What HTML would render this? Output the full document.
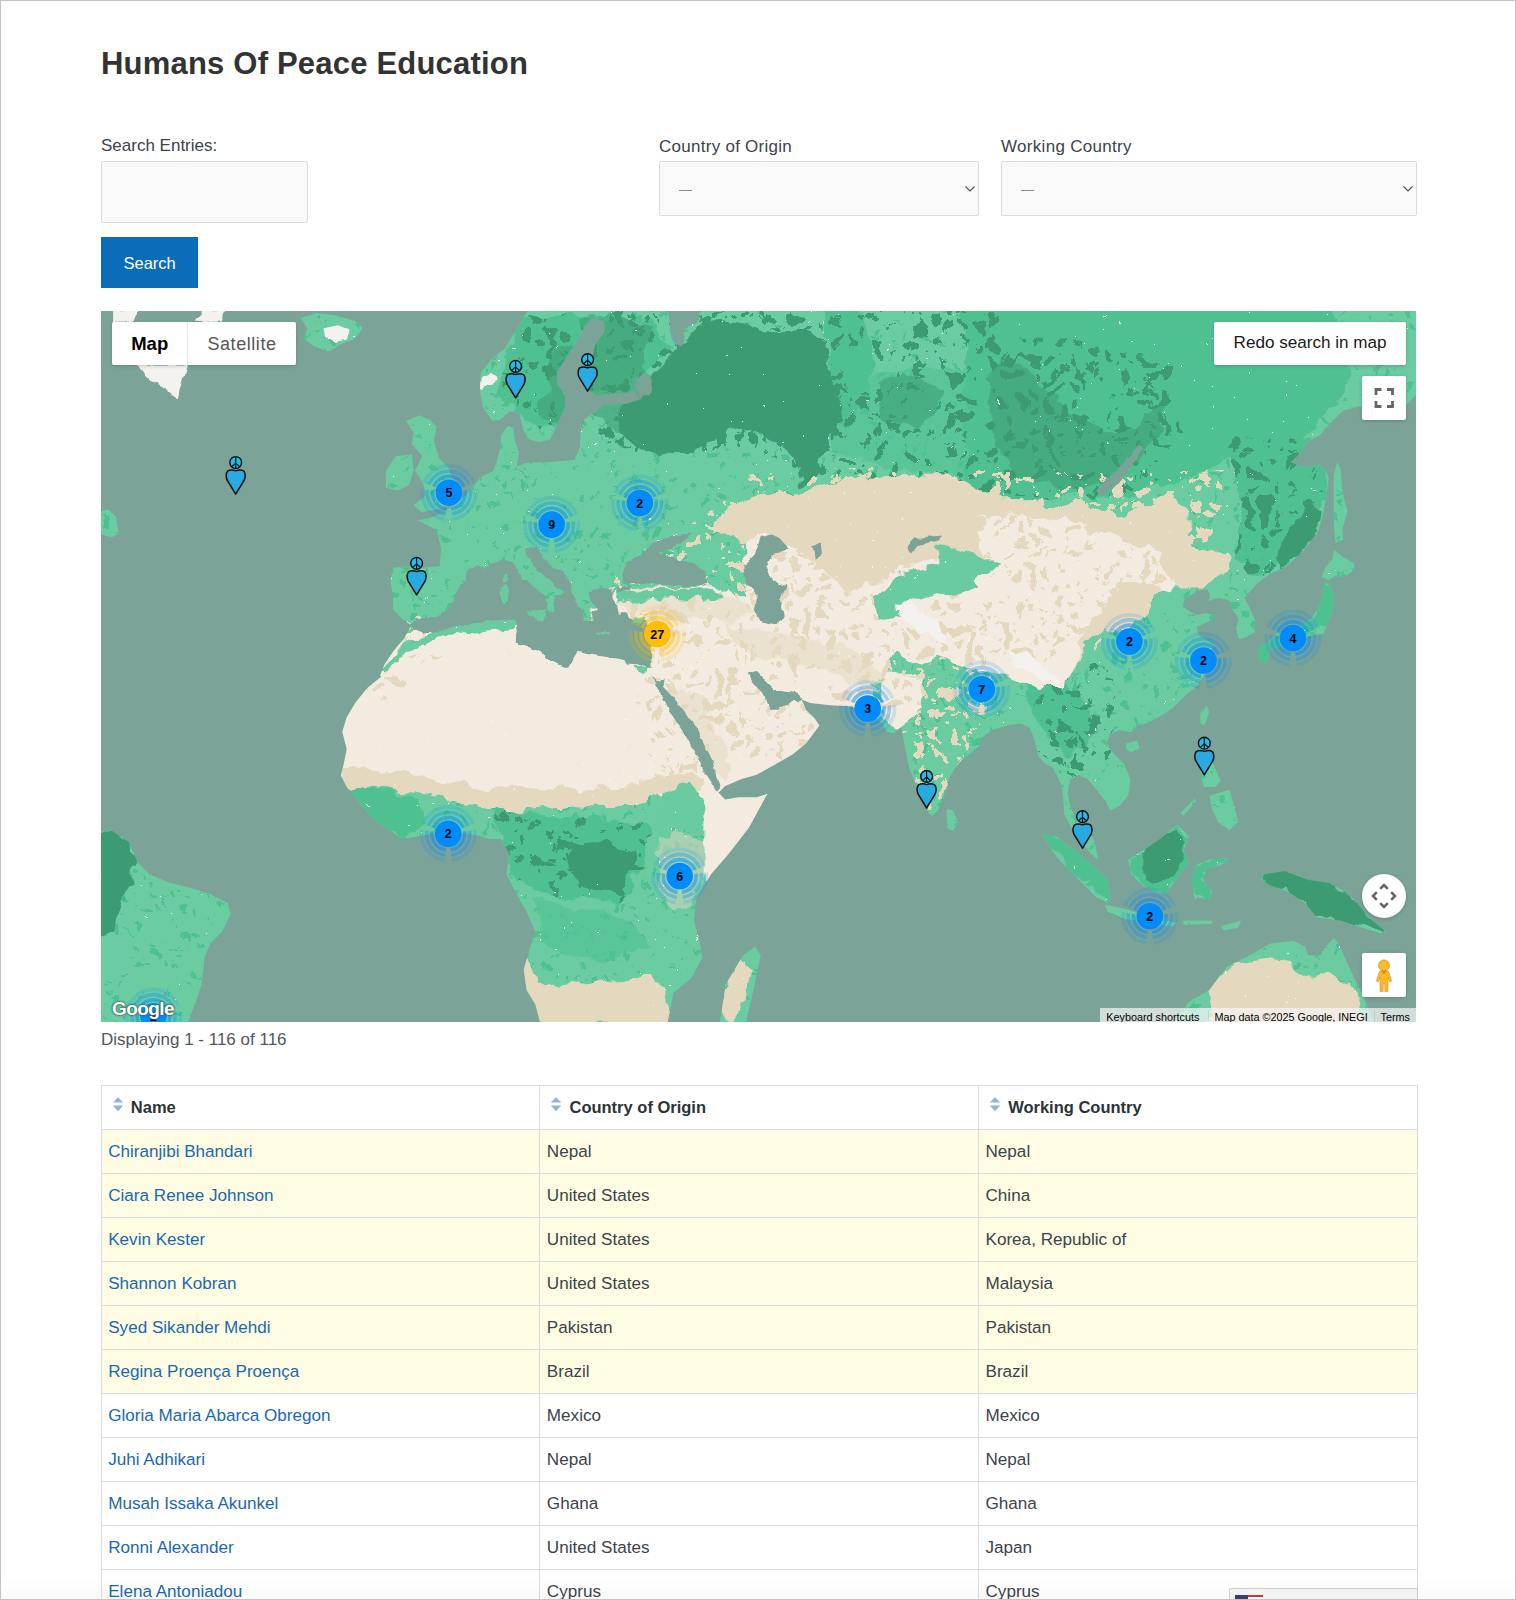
<!DOCTYPE html>
<html><head><meta charset="utf-8">
<style>
html,body{margin:0;padding:0;background:#fff;}
body{width:1516px;height:1600px;position:relative;overflow:hidden;font-family:"Liberation Sans",sans-serif;}
.frame{position:absolute;left:0;top:0;width:1514px;height:1598px;border:1px solid #c3c3c3;pointer-events:none;z-index:50;}
.t{position:absolute;white-space:nowrap;line-height:1;}
.title{left:101px;top:47.5px;font-size:31px;font-weight:bold;color:#333;letter-spacing:0.2px;}
.lbl{font-size:17px;color:#3c434a;}
.inp{position:absolute;box-sizing:border-box;background:#f9f9f9;border:1px solid #dcdcde;border-radius:2px;}
.btn{position:absolute;left:101px;top:237px;width:97px;height:51px;background:#0b6cb9;}
.sel .dash{position:absolute;height:1px;background:#8c8f94;}
.map{position:absolute;left:101px;top:311px;width:1315px;height:711px;overflow:hidden;background:#7ba397;}
.tbl{position:absolute;left:101px;top:1085px;width:1316px;}
.row{position:absolute;left:0;width:1316px;height:44px;box-sizing:border-box;}
.cell{position:absolute;top:0;height:44px;box-sizing:border-box;}
.ct{position:absolute;font-size:17.1px;line-height:1;white-space:nowrap;color:#3c434a;}
.lnk{color:#1a68b0;}
</style></head><body>
<div class="frame"></div>
<div class="t title">Humans Of Peace Education</div>
<div class="t lbl" style="left:101px;top:137px;">Search Entries:</div>
<div class="inp" style="left:101px;top:161px;width:207px;height:62px;"></div>
<div class="btn"></div>
<div class="t" style="left:123.5px;top:254.5px;font-size:16.5px;color:#fff;">Search</div>
<div class="t lbl" style="left:659px;top:137.5px;letter-spacing:0.27px;">Country of Origin</div>
<div class="inp" style="left:659px;top:161px;width:320px;height:55px;"></div>
<div style="position:absolute;left:679px;top:190px;width:13px;height:1.2px;background:#8c8f94;"></div>
<svg style="position:absolute;left:963px;top:184px" width="14" height="10"><path d="M2.5 2.5 L7 7 L11.5 2.5" fill="none" stroke="#50575e" stroke-width="1.2"/></svg>
<div class="t lbl" style="left:1001px;top:137.5px;letter-spacing:0.3px;">Working Country</div>
<div class="inp" style="left:1001px;top:161px;width:416px;height:55px;"></div>
<div style="position:absolute;left:1021px;top:190px;width:13px;height:1.2px;background:#8c8f94;"></div>
<svg style="position:absolute;left:1401px;top:184px" width="14" height="10"><path d="M2.5 2.5 L7 7 L11.5 2.5" fill="none" stroke="#50575e" stroke-width="1.2"/></svg>
<div class="map"><svg width="1315" height="711" viewBox="0 0 1315 711" style="position:absolute;left:0;top:0">
<defs><clipPath id="land"><path d="M1315.0 -11.0 L427.0 -11.0 L427.0 -1.1 L415.8 18.7 L403.5 37.7 L391.1 47.8 L379.9 61.3 L378.8 79.2 L382.2 97.2 L391.1 109.5 L397.9 109.5 L409.1 100.5 L418.1 101.7 L422.5 119.6 L428.1 128.6 L438.2 131.3 L449.4 128.6 L456.2 112.9 L464.0 97.2 L464.0 84.8 L456.2 72.5 L456.2 61.3 L466.3 44.5 L476.4 29.9 L484.2 14.2 L490.9 7.5 L503.3 9.7 L503.3 20.9 L494.3 33.2 L490.9 47.8 L492.1 65.8 L488.7 79.2 L495.4 84.8 L516.7 82.6 L534.7 80.3 L539.2 88.2 L525.7 92.7 L503.3 93.8 L495.4 99.4 L483.1 108.4 L479.7 119.6 L478.6 137.5 L473.0 148.8 L449.4 151.0 L424.8 152.1 L415.8 155.5 L418.1 142.0 L413.6 128.6 L412.4 116.2 L406.8 115.1 L400.1 124.1 L399.0 137.5 L395.6 151.0 L392.3 160.0 L382.2 164.4 L373.2 173.4 L364.2 184.6 L353.0 193.6 L341.8 202.6 L328.3 207.1 L317.1 209.3 L318.3 210.2 L335.7 218.9 L340.0 237.8 L338.6 255.2 L324.1 256.7 L306.6 255.2 L292.1 256.7 L289.2 269.7 L292.1 284.2 L292.1 298.7 L300.8 307.5 L311.0 314.7 L308.2 317.7 L303.7 326.7 L292.5 340.1 L283.5 353.6 L279.0 364.8 L280.5 365.6 L266.0 377.2 L254.4 391.7 L245.7 406.2 L241.3 420.8 L245.7 438.2 L242.8 452.7 L239.9 464.3 L245.7 475.9 L257.3 490.4 L271.8 507.8 L289.2 519.4 L300.8 528.1 L318.3 525.2 L332.8 522.3 L347.3 525.2 L364.7 522.3 L379.2 525.2 L387.9 528.1 L399.5 528.1 L408.2 542.7 L405.3 563.0 L414.0 580.4 L425.6 600.7 L434.4 621.0 L428.5 638.4 L422.7 658.7 L425.6 679.1 L434.4 693.6 L439.0 711.0 L439.0 719.0 L567.0 719.0 L566.7 711.0 L572.5 682.0 L589.9 667.5 L601.5 647.1 L598.6 629.7 L592.8 609.4 L595.7 586.2 L610.2 563.0 L627.7 542.7 L648.0 516.5 L665.4 484.6 L666.8 482.8 L655.6 486.2 L637.7 486.2 L624.2 488.4 L617.5 481.7 L624.2 475.0 L639.9 468.2 L655.6 463.8 L673.6 453.7 L691.5 443.6 L705.0 432.4 L711.7 423.4 L718.4 414.4 L713.9 407.7 L705.0 398.7 L700.5 388.6 L709.4 392.0 L729.6 394.2 L747.6 395.3 L763.3 398.7 L772.2 403.2 L781.2 412.2 L785.7 421.1 L792.4 422.3 L800.3 416.7 L803.6 434.6 L808.1 457.0 L817.1 479.4 L826.1 499.6 L830.6 505.2 L837.3 499.6 L844.0 483.9 L848.5 466.0 L857.5 452.5 L870.9 441.3 L879.0 434.6 L879.4 428.1 L890.6 419.1 L906.3 414.6 L919.7 412.4 L928.7 416.8 L933.2 428.1 L937.7 446.0 L944.4 452.7 L951.1 456.1 L955.6 463.9 L961.2 477.4 L962.4 490.8 L963.5 504.3 L973.6 522.2 L982.5 533.5 L991.5 544.7 L997.1 549.2 L993.8 531.2 L987.0 517.8 L975.8 508.8 L969.1 495.3 L966.8 481.9 L969.1 468.4 L978.1 463.9 L987.0 468.4 L996.0 479.6 L1005.0 490.8 L1009.4 499.8 L1018.4 495.3 L1027.4 484.1 L1029.6 468.4 L1022.9 452.7 L1011.7 441.5 L1005.0 432.5 L1009.4 423.6 L1018.4 419.1 L1029.6 421.3 L1036.4 414.6 L1045.3 412.4 L1058.8 405.6 L1072.2 396.7 L1085.7 383.2 L1096.9 374.2 L1103.6 363.0 L1108.1 347.3 L1112.6 333.9 L1097.3 322.8 L1095.6 315.9 L1111.0 309.1 L1114.5 303.9 L1104.2 302.2 L1095.6 303.9 L1088.7 300.5 L1081.9 295.4 L1083.6 288.5 L1095.6 279.9 L1105.9 278.2 L1109.3 283.4 L1107.6 290.2 L1117.9 286.8 L1128.2 289.4 L1131.6 298.8 L1137.6 307.4 L1135.0 317.7 L1137.6 327.9 L1145.3 326.2 L1153.9 321.1 L1153.9 309.1 L1148.8 297.1 L1143.6 286.8 L1155.6 273.1 L1169.3 262.8 L1184.8 255.9 L1201.9 240.5 L1217.4 219.9 L1222.5 201.0 L1225.9 180.5 L1227.7 166.7 L1224.2 158.2 L1217.4 153.0 L1208.8 156.4 L1198.5 154.7 L1189.9 151.3 L1196.8 144.4 L1207.1 130.7 L1218.6 124.6 L1230.2 111.5 L1241.8 99.9 L1256.3 95.6 L1285.3 94.1 L1305.6 94.1 L1315.8 82.5 L1329.0 82.0 Z"/><path d="M305.2 110.1 L318.3 104.3 L328.4 108.6 L335.7 115.9 L332.8 130.4 L338.6 147.8 L347.3 156.5 L351.6 168.1 L358.9 179.7 L356.0 191.4 L341.5 197.2 L321.2 201.5 L312.5 194.3 L325.5 184.1 L321.2 171.0 L313.9 159.4 L321.2 144.9 L311.0 133.3 L312.5 121.7 Z"/><path d="M284.9 159.4 L295.0 144.9 L311.0 143.5 L312.5 159.4 L308.1 173.9 L296.5 179.7 L284.9 176.8 Z"/><path d="M199.3 7.1 L215.2 2.1 L234.1 4.2 L254.4 10.0 L261.7 17.2 L254.4 27.4 L239.9 33.2 L228.3 40.4 L213.8 36.1 L202.2 27.4 L206.5 17.2 Z"/><path d="M-1.0 200.1 L7.7 198.6 L15.0 205.9 L17.9 223.3 L10.6 226.2 L-1.0 223.3 Z"/><path d="M845.7 497.6 L852.5 499.8 L856.9 511.0 L852.5 520.0 L846.8 517.8 L845.7 508.8 Z"/><path d="M618.9 711.0 L624.7 673.3 L642.2 644.2 L653.8 635.5 L659.6 644.2 L653.8 673.3 L645.1 711.0 Z"/><path d="M1025.1 432.5 L1036.4 429.2 L1038.6 437.0 L1029.6 441.5 L1025.1 438.1 Z"/><path d="M1099.2 401.1 L1105.9 394.4 L1108.1 401.1 L1103.6 414.6 L1099.2 412.4 Z"/><path d="M941.4 522.3 L954.5 525.2 L974.8 539.7 L995.1 557.2 L1006.7 568.8 L1009.6 586.2 L1006.7 592.0 L995.1 586.2 L977.7 568.8 L960.3 551.4 L948.7 536.8 Z"/><path d="M1003.8 593.4 L1024.1 597.8 L1041.5 603.6 L1064.7 609.4 L1076.4 612.3 L1070.6 615.2 L1047.3 612.3 L1024.1 608.0 L1006.7 600.7 Z"/><path d="M1082.2 609.4 L1111.2 609.4 L1111.2 612.9 L1082.2 613.8 Z"/><path d="M1119.9 615.2 L1140.2 609.4 L1137.3 616.7 L1122.8 619.6 Z"/><path d="M1027.0 548.5 L1041.5 539.7 L1058.9 528.1 L1076.4 513.6 L1088.0 525.2 L1082.2 539.7 L1088.0 551.4 L1079.3 563.0 L1070.6 574.6 L1064.7 583.3 L1053.1 580.4 L1041.5 574.6 L1029.9 563.0 Z"/><path d="M1090.9 571.7 L1093.8 554.3 L1108.3 548.5 L1128.6 547.0 L1119.9 554.3 L1105.4 557.2 L1102.5 568.8 L1111.2 580.4 L1108.3 589.1 L1096.7 586.2 L1093.8 589.1 Z"/><path d="M1096.7 438.2 L1105.4 438.2 L1119.9 470.1 L1114.1 475.9 L1102.5 475.9 L1099.6 461.4 Z"/><path d="M1108.3 484.6 L1128.6 478.8 L1137.3 510.7 L1128.6 519.4 L1117.0 510.7 L1111.2 499.1 Z"/><path d="M1079.3 502.0 L1093.8 487.5 L1095.2 490.4 L1082.2 504.9 Z"/><path d="M1163.4 563.0 L1183.7 560.1 L1207.0 568.8 L1227.3 571.7 L1244.7 580.4 L1256.3 592.0 L1267.9 606.5 L1285.3 621.0 L1279.5 622.5 L1256.3 615.2 L1238.9 609.4 L1215.7 606.5 L1204.1 592.0 L1186.6 580.4 L1169.2 574.6 L1160.5 568.8 Z"/><path d="M1070.6 713.9 L1088.0 690.7 L1108.3 679.1 L1125.7 655.8 L1148.9 644.2 L1169.2 632.6 L1192.5 629.7 L1204.1 635.5 L1207.0 644.2 L1218.6 644.2 L1227.3 632.6 L1233.1 626.8 L1238.9 635.5 L1250.5 661.6 L1262.1 684.9 L1273.7 713.9 Z"/><path d="M1236.2 151.3 L1239.7 158.2 L1241.4 180.5 L1246.5 201.0 L1244.8 206.2 L1241.4 218.2 L1242.2 228.5 L1234.5 231.9 L1232.8 214.8 L1232.8 180.5 L1232.8 163.3 Z"/><path d="M1232.8 238.8 L1241.4 245.6 L1253.4 252.5 L1253.4 259.3 L1243.1 266.2 L1234.5 264.5 L1227.7 269.6 L1220.8 266.2 L1224.2 255.9 L1231.1 249.1 Z"/><path d="M1224.2 271.3 L1220.8 283.4 L1219.1 293.6 L1210.5 307.4 L1201.9 312.5 L1189.9 317.7 L1176.2 322.8 L1165.9 331.4 L1159.1 334.8 L1157.3 341.7 L1159.1 352.0 L1165.9 352.0 L1169.3 338.2 L1179.6 334.8 L1189.9 331.4 L1200.2 327.9 L1210.5 324.5 L1222.5 322.8 L1225.9 314.2 L1231.1 300.5 L1232.8 286.8 L1229.4 274.8 Z"/><path d="M-3.9 520.9 L10.6 519.4 L28.0 531.0 L36.7 551.4 L48.3 563.0 L68.7 571.7 L91.9 577.5 L109.3 583.3 L126.7 592.0 L129.6 603.6 L120.9 621.0 L109.3 632.6 L103.5 647.1 L100.6 673.3 L94.8 690.7 L86.1 713.9 L-3.9 713.9 Z"/></clipPath><clipPath id="desc"><path d="M801.4 409.9 L830.6 376.3 L864.2 387.5 L879.0 421.1 L857.5 452.5 L844.0 483.9 L830.6 504.1 L814.9 470.5 L805.9 434.6 Z"/><path d="M827.8 266.6 L906.3 277.8 L917.5 356.3 L883.9 401.1 L827.8 423.6 Z"/><path d="M499.0 279.0 L659.0 159.0 L859.0 159.0 L1139.0 159.0 L1099.0 249.0 L1049.0 289.0 L989.0 339.0 L859.0 369.0 L779.0 449.0 L659.0 449.0 L599.0 429.0 L554.0 389.0 Z"/><path d="M539.0 389.0 L599.0 379.0 L619.0 469.0 L579.0 489.0 L549.0 449.0 Z"/><path d="M259.0 309.0 L319.0 309.0 L339.0 339.0 L279.0 389.0 L249.0 369.0 Z"/></clipPath><clipPath id="forc"><path d="M879.0 23.0 L966.1 28.8 L1067.7 52.0 L1082.2 124.6 L1053.1 182.7 L966.1 185.6 L879.0 182.7 Z"/><path d="M413.6 16.4 L436.0 5.2 L480.8 3.0 L503.3 7.5 L548.1 7.5 L570.6 38.9 L525.7 72.5 L480.8 88.2 L465.1 110.6 L436.0 119.6 L413.6 99.4 L395.6 83.7 L404.6 50.1 Z"/><path d="M479.0 -5.5 L899.0 -5.5 L899.0 166.2 L728.3 166.2 L645.2 138.5 L534.4 144.1 L479.0 124.7 Z"/><path d="M391.5 495.8 L432.2 501.6 L475.7 504.5 L519.2 510.3 L548.3 516.1 L542.5 545.1 L530.8 579.9 L519.2 591.5 L490.2 591.5 L461.2 585.7 L432.2 579.9 L408.9 562.5 L403.1 539.3 Z"/><path d="M1124.8 125.6 L1227.7 125.6 L1227.7 180.5 L1193.4 240.5 L1159.1 266.2 L1133.3 249.1 L1141.9 197.6 Z"/><path d="M1163.4 563.0 L1183.7 560.1 L1207.0 568.8 L1227.3 571.7 L1244.7 580.4 L1256.3 592.0 L1267.9 606.5 L1285.3 621.0 L1279.5 622.5 L1256.3 615.2 L1238.9 609.4 L1215.7 606.5 L1204.1 592.0 L1186.6 580.4 L1169.2 574.6 L1160.5 568.8 Z"/><path d="M934.1 354.0 L1009.6 354.0 L1018.3 441.1 L966.1 470.1 L937.0 441.1 Z"/></clipPath><filter id="rag2" x="-2%" y="-2%" width="104%" height="104%"><feTurbulence type="fractalNoise" baseFrequency="0.12" numOctaves="2" seed="4" result="n"/><feDisplacementMap in="SourceGraphic" in2="n" scale="5" xChannelSelector="R" yChannelSelector="G"/></filter><filter id="rag" x="-5%" y="-5%" width="110%" height="110%"><feTurbulence type="fractalNoise" baseFrequency="0.045" numOctaves="3" seed="7" result="n"/><feDisplacementMap in="SourceGraphic" in2="n" scale="18" xChannelSelector="R" yChannelSelector="G"/></filter><filter id="spkMed" x="0" y="0" width="1315" height="711" filterUnits="userSpaceOnUse" color-interpolation-filters="sRGB"><feTurbulence type="turbulence" baseFrequency="0.1" numOctaves="2" seed="21"/><feColorMatrix type="matrix" values="0 0 0 0 0.31  0 0 0 0 0.757  0 0 0 0 0.565  12 0 0 0 -5.2"/><feComponentTransfer><feFuncA type="discrete" tableValues="0 1"/></feComponentTransfer></filter><filter id="spkDark" x="0" y="0" width="1315" height="711" filterUnits="userSpaceOnUse" color-interpolation-filters="sRGB"><feTurbulence type="turbulence" baseFrequency="0.07" numOctaves="2" seed="9"/><feColorMatrix type="matrix" values="0 0 0 0 0.239  0 0 0 0 0.608  0 0 0 0 0.447  11 0 0 0 -3.7"/><feComponentTransfer><feFuncA type="discrete" tableValues="0 1"/></feComponentTransfer></filter><filter id="spkTan" x="0" y="0" width="1315" height="711" filterUnits="userSpaceOnUse" color-interpolation-filters="sRGB"><feTurbulence type="turbulence" baseFrequency="0.08" numOctaves="2" seed="13"/><feColorMatrix type="matrix" values="0 0 0 0 0.894  0 0 0 0 0.847  0 0 0 0 0.749  11 0 0 0 -3.6"/><feComponentTransfer><feFuncA type="discrete" tableValues="0 1"/></feComponentTransfer></filter><filter id="spkWhite" x="0" y="0" width="1315" height="711" filterUnits="userSpaceOnUse" color-interpolation-filters="sRGB"><feTurbulence type="fractalNoise" baseFrequency="0.3" numOctaves="2" seed="3"/><feColorMatrix type="matrix" values="0 0 0 0 0.97  0 0 0 0 0.97  0 0 0 0 0.95  25 0 0 0 -20.2"/><feComponentTransfer><feFuncA type="discrete" tableValues="0 1"/></feComponentTransfer></filter></defs>
<rect width="1315" height="711" fill="#7ba397"/>
<path d="M1315.0 -11.0 L427.0 -11.0 L427.0 -1.1 L415.8 18.7 L403.5 37.7 L391.1 47.8 L379.9 61.3 L378.8 79.2 L382.2 97.2 L391.1 109.5 L397.9 109.5 L409.1 100.5 L418.1 101.7 L422.5 119.6 L428.1 128.6 L438.2 131.3 L449.4 128.6 L456.2 112.9 L464.0 97.2 L464.0 84.8 L456.2 72.5 L456.2 61.3 L466.3 44.5 L476.4 29.9 L484.2 14.2 L490.9 7.5 L503.3 9.7 L503.3 20.9 L494.3 33.2 L490.9 47.8 L492.1 65.8 L488.7 79.2 L495.4 84.8 L516.7 82.6 L534.7 80.3 L539.2 88.2 L525.7 92.7 L503.3 93.8 L495.4 99.4 L483.1 108.4 L479.7 119.6 L478.6 137.5 L473.0 148.8 L449.4 151.0 L424.8 152.1 L415.8 155.5 L418.1 142.0 L413.6 128.6 L412.4 116.2 L406.8 115.1 L400.1 124.1 L399.0 137.5 L395.6 151.0 L392.3 160.0 L382.2 164.4 L373.2 173.4 L364.2 184.6 L353.0 193.6 L341.8 202.6 L328.3 207.1 L317.1 209.3 L318.3 210.2 L335.7 218.9 L340.0 237.8 L338.6 255.2 L324.1 256.7 L306.6 255.2 L292.1 256.7 L289.2 269.7 L292.1 284.2 L292.1 298.7 L300.8 307.5 L311.0 314.7 L308.2 317.7 L303.7 326.7 L292.5 340.1 L283.5 353.6 L279.0 364.8 L280.5 365.6 L266.0 377.2 L254.4 391.7 L245.7 406.2 L241.3 420.8 L245.7 438.2 L242.8 452.7 L239.9 464.3 L245.7 475.9 L257.3 490.4 L271.8 507.8 L289.2 519.4 L300.8 528.1 L318.3 525.2 L332.8 522.3 L347.3 525.2 L364.7 522.3 L379.2 525.2 L387.9 528.1 L399.5 528.1 L408.2 542.7 L405.3 563.0 L414.0 580.4 L425.6 600.7 L434.4 621.0 L428.5 638.4 L422.7 658.7 L425.6 679.1 L434.4 693.6 L439.0 711.0 L439.0 719.0 L567.0 719.0 L566.7 711.0 L572.5 682.0 L589.9 667.5 L601.5 647.1 L598.6 629.7 L592.8 609.4 L595.7 586.2 L610.2 563.0 L627.7 542.7 L648.0 516.5 L665.4 484.6 L666.8 482.8 L655.6 486.2 L637.7 486.2 L624.2 488.4 L617.5 481.7 L624.2 475.0 L639.9 468.2 L655.6 463.8 L673.6 453.7 L691.5 443.6 L705.0 432.4 L711.7 423.4 L718.4 414.4 L713.9 407.7 L705.0 398.7 L700.5 388.6 L709.4 392.0 L729.6 394.2 L747.6 395.3 L763.3 398.7 L772.2 403.2 L781.2 412.2 L785.7 421.1 L792.4 422.3 L800.3 416.7 L803.6 434.6 L808.1 457.0 L817.1 479.4 L826.1 499.6 L830.6 505.2 L837.3 499.6 L844.0 483.9 L848.5 466.0 L857.5 452.5 L870.9 441.3 L879.0 434.6 L879.4 428.1 L890.6 419.1 L906.3 414.6 L919.7 412.4 L928.7 416.8 L933.2 428.1 L937.7 446.0 L944.4 452.7 L951.1 456.1 L955.6 463.9 L961.2 477.4 L962.4 490.8 L963.5 504.3 L973.6 522.2 L982.5 533.5 L991.5 544.7 L997.1 549.2 L993.8 531.2 L987.0 517.8 L975.8 508.8 L969.1 495.3 L966.8 481.9 L969.1 468.4 L978.1 463.9 L987.0 468.4 L996.0 479.6 L1005.0 490.8 L1009.4 499.8 L1018.4 495.3 L1027.4 484.1 L1029.6 468.4 L1022.9 452.7 L1011.7 441.5 L1005.0 432.5 L1009.4 423.6 L1018.4 419.1 L1029.6 421.3 L1036.4 414.6 L1045.3 412.4 L1058.8 405.6 L1072.2 396.7 L1085.7 383.2 L1096.9 374.2 L1103.6 363.0 L1108.1 347.3 L1112.6 333.9 L1097.3 322.8 L1095.6 315.9 L1111.0 309.1 L1114.5 303.9 L1104.2 302.2 L1095.6 303.9 L1088.7 300.5 L1081.9 295.4 L1083.6 288.5 L1095.6 279.9 L1105.9 278.2 L1109.3 283.4 L1107.6 290.2 L1117.9 286.8 L1128.2 289.4 L1131.6 298.8 L1137.6 307.4 L1135.0 317.7 L1137.6 327.9 L1145.3 326.2 L1153.9 321.1 L1153.9 309.1 L1148.8 297.1 L1143.6 286.8 L1155.6 273.1 L1169.3 262.8 L1184.8 255.9 L1201.9 240.5 L1217.4 219.9 L1222.5 201.0 L1225.9 180.5 L1227.7 166.7 L1224.2 158.2 L1217.4 153.0 L1208.8 156.4 L1198.5 154.7 L1189.9 151.3 L1196.8 144.4 L1207.1 130.7 L1218.6 124.6 L1230.2 111.5 L1241.8 99.9 L1256.3 95.6 L1285.3 94.1 L1305.6 94.1 L1315.8 82.5 L1329.0 82.0 Z" fill="#6bcba1"/>
<path d="M305.2 110.1 L318.3 104.3 L328.4 108.6 L335.7 115.9 L332.8 130.4 L338.6 147.8 L347.3 156.5 L351.6 168.1 L358.9 179.7 L356.0 191.4 L341.5 197.2 L321.2 201.5 L312.5 194.3 L325.5 184.1 L321.2 171.0 L313.9 159.4 L321.2 144.9 L311.0 133.3 L312.5 121.7 Z" fill="#6bcba1"/>
<path d="M284.9 159.4 L295.0 144.9 L311.0 143.5 L312.5 159.4 L308.1 173.9 L296.5 179.7 L284.9 176.8 Z" fill="#6bcba1"/>
<path d="M199.3 7.1 L215.2 2.1 L234.1 4.2 L254.4 10.0 L261.7 17.2 L254.4 27.4 L239.9 33.2 L228.3 40.4 L213.8 36.1 L202.2 27.4 L206.5 17.2 Z" fill="#6bcba1"/>
<path d="M-1.0 200.1 L7.7 198.6 L15.0 205.9 L17.9 223.3 L10.6 226.2 L-1.0 223.3 Z" fill="#6bcba1"/>
<path d="M426.0 300.2 L435.5 299.1 L445.0 299.1 L442.6 309.7 L440.2 310.9 L433.1 306.2 L427.2 303.8 Z" fill="#6bcba1"/>
<path d="M399.3 276.5 L405.8 274.1 L408.2 278.9 L407.0 288.4 L403.4 293.1 L400.5 289.6 L398.7 282.4 Z" fill="#6bcba1"/>
<path d="M401.7 263.4 L405.8 262.2 L407.0 268.2 L404.6 272.9 L402.2 269.4 Z" fill="#6bcba1"/>
<path d="M494.9 320.4 L509.1 321.6 L506.7 324.0 L496.0 322.8 Z" fill="#6bcba1"/>
<path d="M532.4 307.6 L543.6 306.9 L540.3 311.4 L533.6 311.0 Z" fill="#6bcba1"/>
<path d="M845.7 497.6 L852.5 499.8 L856.9 511.0 L852.5 520.0 L846.8 517.8 L845.7 508.8 Z" fill="#6bcba1"/>
<path d="M618.9 711.0 L624.7 673.3 L642.2 644.2 L653.8 635.5 L659.6 644.2 L653.8 673.3 L645.1 711.0 Z" fill="#6bcba1"/>
<path d="M1025.1 432.5 L1036.4 429.2 L1038.6 437.0 L1029.6 441.5 L1025.1 438.1 Z" fill="#6bcba1"/>
<path d="M1099.2 401.1 L1105.9 394.4 L1108.1 401.1 L1103.6 414.6 L1099.2 412.4 Z" fill="#6bcba1"/>
<path d="M941.4 522.3 L954.5 525.2 L974.8 539.7 L995.1 557.2 L1006.7 568.8 L1009.6 586.2 L1006.7 592.0 L995.1 586.2 L977.7 568.8 L960.3 551.4 L948.7 536.8 Z" fill="#6bcba1"/>
<path d="M1003.8 593.4 L1024.1 597.8 L1041.5 603.6 L1064.7 609.4 L1076.4 612.3 L1070.6 615.2 L1047.3 612.3 L1024.1 608.0 L1006.7 600.7 Z" fill="#6bcba1"/>
<path d="M1082.2 609.4 L1111.2 609.4 L1111.2 612.9 L1082.2 613.8 Z" fill="#6bcba1"/>
<path d="M1119.9 615.2 L1140.2 609.4 L1137.3 616.7 L1122.8 619.6 Z" fill="#6bcba1"/>
<path d="M1027.0 548.5 L1041.5 539.7 L1058.9 528.1 L1076.4 513.6 L1088.0 525.2 L1082.2 539.7 L1088.0 551.4 L1079.3 563.0 L1070.6 574.6 L1064.7 583.3 L1053.1 580.4 L1041.5 574.6 L1029.9 563.0 Z" fill="#6bcba1"/>
<path d="M1090.9 571.7 L1093.8 554.3 L1108.3 548.5 L1128.6 547.0 L1119.9 554.3 L1105.4 557.2 L1102.5 568.8 L1111.2 580.4 L1108.3 589.1 L1096.7 586.2 L1093.8 589.1 Z" fill="#6bcba1"/>
<path d="M1096.7 438.2 L1105.4 438.2 L1119.9 470.1 L1114.1 475.9 L1102.5 475.9 L1099.6 461.4 Z" fill="#6bcba1"/>
<path d="M1108.3 484.6 L1128.6 478.8 L1137.3 510.7 L1128.6 519.4 L1117.0 510.7 L1111.2 499.1 Z" fill="#6bcba1"/>
<path d="M1079.3 502.0 L1093.8 487.5 L1095.2 490.4 L1082.2 504.9 Z" fill="#6bcba1"/>
<path d="M1163.4 563.0 L1183.7 560.1 L1207.0 568.8 L1227.3 571.7 L1244.7 580.4 L1256.3 592.0 L1267.9 606.5 L1285.3 621.0 L1279.5 622.5 L1256.3 615.2 L1238.9 609.4 L1215.7 606.5 L1204.1 592.0 L1186.6 580.4 L1169.2 574.6 L1160.5 568.8 Z" fill="#6bcba1"/>
<path d="M1070.6 713.9 L1088.0 690.7 L1108.3 679.1 L1125.7 655.8 L1148.9 644.2 L1169.2 632.6 L1192.5 629.7 L1204.1 635.5 L1207.0 644.2 L1218.6 644.2 L1227.3 632.6 L1233.1 626.8 L1238.9 635.5 L1250.5 661.6 L1262.1 684.9 L1273.7 713.9 Z" fill="#6bcba1"/>
<path d="M1236.2 151.3 L1239.7 158.2 L1241.4 180.5 L1246.5 201.0 L1244.8 206.2 L1241.4 218.2 L1242.2 228.5 L1234.5 231.9 L1232.8 214.8 L1232.8 180.5 L1232.8 163.3 Z" fill="#6bcba1"/>
<path d="M1232.8 238.8 L1241.4 245.6 L1253.4 252.5 L1253.4 259.3 L1243.1 266.2 L1234.5 264.5 L1227.7 269.6 L1220.8 266.2 L1224.2 255.9 L1231.1 249.1 Z" fill="#6bcba1"/>
<path d="M1224.2 271.3 L1220.8 283.4 L1219.1 293.6 L1210.5 307.4 L1201.9 312.5 L1189.9 317.7 L1176.2 322.8 L1165.9 331.4 L1159.1 334.8 L1157.3 341.7 L1159.1 352.0 L1165.9 352.0 L1169.3 338.2 L1179.6 334.8 L1189.9 331.4 L1200.2 327.9 L1210.5 324.5 L1222.5 322.8 L1225.9 314.2 L1231.1 300.5 L1232.8 286.8 L1229.4 274.8 Z" fill="#6bcba1"/>
<path d="M-3.9 520.9 L10.6 519.4 L28.0 531.0 L36.7 551.4 L48.3 563.0 L68.7 571.7 L91.9 577.5 L109.3 583.3 L126.7 592.0 L129.6 603.6 L120.9 621.0 L109.3 632.6 L103.5 647.1 L100.6 673.3 L94.8 690.7 L86.1 713.9 L-3.9 713.9 Z" fill="#6bcba1"/>
<g clip-path="url(#land)"><g filter="url(#rag)">
<path d="M864.5 -11.8 L1227.3 -11.8 L1256.3 37.5 L1241.8 81.1 L1198.3 133.3 L1140.2 144.9 L1082.2 168.1 L1024.1 182.7 L966.1 182.7 L908.0 191.4 L864.5 197.2 Z" fill="#4fc190"/>
<path d="M722.8 -5.5 L756.0 -5.5 L772.7 27.7 L767.1 83.1 L750.5 116.4 L733.9 105.3 Z" fill="#4fc190"/>
<path d="M413.6 16.4 L436.0 5.2 L480.8 3.0 L503.3 7.5 L548.1 7.5 L570.6 38.9 L525.7 72.5 L480.8 88.2 L465.1 110.6 L436.0 119.6 L413.6 99.4 L395.6 83.7 L404.6 50.1 Z" fill="#4fc190"/>
<path d="M391.5 495.8 L432.2 501.6 L475.7 504.5 L519.2 510.3 L548.3 516.1 L542.5 545.1 L530.8 579.9 L519.2 591.5 L490.2 591.5 L461.2 585.7 L432.2 579.9 L408.9 562.5 L403.1 539.3 Z" fill="#4fc190"/>
<path d="M243.5 475.4 L287.0 478.3 L316.1 487.0 L324.8 516.1 L301.6 527.7 L272.5 510.3 L252.2 492.9 Z" fill="#4fc190"/>
<path d="M924.2 383.2 L939.9 363.0 L964.6 369.7 L982.5 385.4 L996.0 414.6 L984.8 434.8 L964.6 446.0 L946.7 428.1 L933.2 410.1 Z" fill="#4fc190"/>
<path d="M937.0 516.5 L1012.5 557.2 L1012.5 594.9 L942.9 533.9 Z" fill="#4fc190"/>
<path d="M1219.1 266.2 L1236.2 274.8 L1236.2 300.5 L1210.5 326.2 L1159.1 355.4 L1155.6 331.4 L1210.5 309.1 Z" fill="#4fc190"/>
<path d="M1124.8 125.6 L1227.7 125.6 L1227.7 180.5 L1193.4 240.5 L1159.1 266.2 L1133.3 249.1 L1141.9 197.6 Z" fill="#4fc190"/>
<path d="M1027.0 548.5 L1041.5 539.7 L1058.9 528.1 L1076.4 513.6 L1088.0 525.2 L1082.2 539.7 L1088.0 551.4 L1079.3 563.0 L1070.6 574.6 L1064.7 583.3 L1053.1 580.4 L1041.5 574.6 L1029.9 563.0 Z" fill="#4fc190"/>
<path d="M1090.9 571.7 L1093.8 554.3 L1108.3 548.5 L1128.6 547.0 L1119.9 554.3 L1105.4 557.2 L1102.5 568.8 L1111.2 580.4 L1108.3 589.1 L1096.7 586.2 L1093.8 589.1 Z" fill="#4fc190"/>
<rect width="1315" height="711" filter="url(#spkMed)"/>
<path d="M432.2 591.5 L519.2 603.1 L548.3 632.2 L504.7 649.6 L461.2 643.8 L438.0 626.4 Z" fill="#4fc190" opacity="0.6"/>
<path d="M729.2 66.6 L879.0 52.0 L879.0 168.1 L787.3 156.5 L729.2 139.1 Z" fill="#4fc190" opacity="0.6"/>
<path d="M902.2 43.3 L937.0 66.6 L966.1 98.5 L1000.9 118.8 L1029.9 115.9 L1053.1 95.6 L1070.6 81.1 L1058.9 115.9 L1041.5 144.9 L1012.5 168.1 L974.8 179.7 L937.0 173.9 L908.0 156.5 L890.6 115.9 L884.8 69.5 Z" fill="#3d9b72" opacity="0.55"/>
<path d="M453.9 38.9 L471.9 27.6 L487.6 34.4 L480.8 61.3 L469.6 88.2 L453.9 110.6 L436.0 106.1 L445.0 74.7 Z" fill="#3d9b72" opacity="0.55"/>
<path d="M778.2 72.0 L805.9 61.0 L839.2 77.6 L833.6 105.3 L811.5 116.4 L783.8 108.0 Z" fill="#3d9b72" opacity="0.55"/>
<path d="M479.0 5.5 L512.2 0.0 L548.3 16.6 L542.7 83.1 L548.3 124.7 L506.7 116.4 L479.0 83.1 Z" fill="#3d9b72" opacity="0.55"/>
<g clip-path="url(#forc)"><rect width="1315" height="711" filter="url(#spkDark)"/></g>
<path d="M520.6 91.4 L551.0 61.0 L573.2 38.8 L595.4 16.6 L617.5 11.1 L645.2 16.6 L672.9 22.2 L700.6 16.6 L722.8 27.7 L728.3 55.4 L733.9 83.1 L742.2 105.3 L728.3 124.7 L722.8 144.1 L714.5 166.2 L700.6 174.5 L695.1 155.1 L678.5 130.2 L659.1 124.7 L634.1 119.1 L612.0 127.4 L589.8 144.1 L562.1 144.1 L534.4 138.5 L520.6 119.1 Z" fill="#3d9b72"/>
<path d="M472.8 533.5 L504.7 530.6 L533.7 539.3 L530.8 565.4 L519.2 582.8 L496.0 579.9 L472.8 574.1 L467.0 550.9 Z" fill="#3d9b72"/>
<path d="M-3.9 520.9 L16.4 522.3 L28.0 533.9 L33.8 551.4 L28.0 571.7 L22.2 586.2 L16.4 600.7 L13.5 621.0 L-3.9 629.7 Z" fill="#3d9b72"/>
<path d="M1041.5 539.7 L1058.9 528.1 L1076.4 516.5 L1085.1 528.1 L1079.3 545.6 L1067.7 568.8 L1053.1 574.6 L1041.5 563.0 Z" fill="#3d9b72"/>
<path d="M1163.4 563.0 L1183.7 560.1 L1207.0 568.8 L1227.3 571.7 L1244.7 580.4 L1256.3 592.0 L1267.9 606.5 L1285.3 621.0 L1279.5 622.5 L1256.3 615.2 L1238.9 609.4 L1215.7 606.5 L1204.1 592.0 L1186.6 580.4 L1169.2 574.6 L1160.5 568.8 Z" fill="#3d9b72"/>
<path d="M1186.5 218.2 L1200.2 201.0 L1213.9 194.2 L1220.8 201.0 L1217.4 219.9 L1201.9 240.5 L1184.8 255.9 L1176.2 259.3 L1174.5 249.1 L1181.3 235.3 Z" fill="#3d9b72"/>
<path d="M219.0 339.0 L319.0 319.0 L399.0 314.0 L479.0 319.0 L559.0 339.0 L579.0 389.0 L619.0 459.0 L659.0 479.0 L606.3 469.6 L562.8 481.2 L533.7 495.8 L504.7 495.8 L475.7 492.9 L446.7 495.8 L417.7 498.7 L391.5 495.8 L365.4 492.9 L339.3 487.0 L310.3 481.2 L281.2 475.4 L243.5 475.4 L219.0 479.0 Z" fill="#f3ebdf"/>
<path d="M451.5 376.5 L499.0 291.0 L513.2 281.5 L546.5 274.4 L582.1 276.7 L605.9 272.0 L646.2 286.2 L643.9 229.2 L627.2 224.5 L610.6 217.4 L622.5 200.7 L641.5 191.2 L665.2 184.1 L689.0 184.1 L712.7 177.0 L736.5 172.2 L760.2 169.9 L784.0 165.1 L807.7 162.7 L831.5 169.9 L859.0 177.0 L878.9 177.0 L881.7 176.5 L900.7 188.4 L934.0 188.4 L957.7 197.9 L972.0 190.7 L993.4 195.5 L1017.1 207.4 L1040.8 195.5 L1064.6 186.0 L1088.3 200.2 L1088.3 224.0 L1100.2 243.0 L1124.0 238.2 L1131.1 247.7 L1119.2 266.7 L1100.2 276.2 L1076.5 276.2 L1059.8 281.0 L1048.0 295.2 L1040.8 309.5 L1029.0 316.6 L1010.0 319.0 L991.0 323.7 L981.5 335.6 L972.0 357.0 L962.5 376.0 L934.0 376.0 L910.2 366.5 L886.5 361.7 L862.7 357.0 L839.0 347.5 L819.6 352.7 L795.8 340.8 L784.0 352.7 L772.1 376.5 L779.2 409.0 L736.5 471.5 L665.2 495.2 L570.2 495.2 Z" fill="#f3ebdf"/>
<path d="M557.0 469.6 L606.3 458.0 L669.0 472.5 L693.4 545.1 L606.3 603.1 L603.4 559.6 L603.4 524.8 L577.3 516.1 L565.7 501.6 Z" fill="#f3ebdf"/>
<path d="M781.2 360.6 L808.1 360.6 L821.6 376.3 L817.1 403.2 L799.2 416.7 L785.7 403.2 L781.2 383.0 Z" fill="#f3ebdf"/>
<g clip-path="url(#desc)"><rect width="1315" height="711" filter="url(#spkTan)"/></g>
<path d="M240.6 460.9 L258.0 458.0 L287.0 460.9 L316.1 463.8 L345.1 472.5 L374.1 478.3 L403.1 478.3 L432.2 475.4 L461.2 475.4 L490.2 478.3 L519.2 475.4 L548.3 466.7 L577.3 460.9 L606.3 469.6 L594.7 487.0 L562.8 481.2 L533.7 495.8 L504.7 495.8 L475.7 492.9 L446.7 495.8 L417.7 498.7 L391.5 495.8 L365.4 492.9 L339.3 487.0 L310.3 481.2 L281.2 475.4 L243.5 475.4 Z" fill="#e4d8bf"/>
<path d="M610.6 217.4 L622.5 200.7 L641.5 191.2 L665.2 184.1 L689.0 184.1 L712.7 177.0 L736.5 172.2 L760.2 169.9 L784.0 165.1 L807.7 162.7 L831.5 169.9 L859.0 177.0 L878.9 177.0 L878.9 243.5 L831.5 250.6 L795.8 257.7 L772.1 272.0 L748.3 281.5 L724.6 262.5 L700.8 241.1 L684.2 229.2 L665.2 222.1 L643.9 229.2 L627.2 224.5 Z" fill="#e4d8bf"/>
<path d="M881.7 176.5 L900.7 188.4 L934.0 188.4 L957.7 197.9 L972.0 190.7 L993.4 195.5 L1017.1 207.4 L1040.8 195.5 L1064.6 186.0 L1088.3 200.2 L1088.3 224.0 L1100.2 243.0 L1124.0 238.2 L1131.1 247.7 L1119.2 266.7 L1100.2 276.2 L1076.5 276.2 L1067.0 262.0 L1052.7 235.9 L1017.1 228.7 L981.5 212.1 L945.9 207.4 L910.2 200.2 L874.6 207.4 L839.0 200.2 L827.1 164.6 L862.7 167.0 Z" fill="#e4d8bf"/>
<path d="M1059.8 281.0 L1048.0 295.2 L1040.8 309.5 L1029.0 316.6 L1010.0 319.0 L991.0 323.7 L981.5 335.6 L972.0 357.0 L981.5 319.0 L1017.1 276.2 L1052.7 271.5 Z" fill="#e4d8bf"/>
<path d="M420.6 617.7 L432.2 655.4 L438.0 672.8 L461.2 669.9 L490.2 675.7 L519.2 667.0 L548.3 667.0 L565.7 675.7 L571.5 713.4 L420.6 713.4 Z" fill="#e4d8bf"/>
<path d="M623.7 667.0 L641.1 643.8 L652.7 655.4 L644.0 690.2 L629.5 713.4 L620.8 704.7 Z" fill="#e4d8bf"/>
<path d="M1105.4 713.9 L1111.2 667.5 L1125.7 661.6 L1146.0 650.0 L1169.2 647.1 L1186.6 655.8 L1198.3 661.6 L1227.3 661.6 L1244.7 673.3 L1256.3 690.7 L1265.0 713.9 Z" fill="#e4d8bf"/>
<path d="M513.2 281.5 L546.5 274.4 L582.1 276.7 L617.7 281.5 L641.5 291.0 L653.4 305.2 L617.7 310.0 L582.1 305.2 L546.5 302.9 L522.7 302.9 Z" fill="#e4d8bf" opacity="0.5"/>
<path d="M622.5 310.0 L665.2 319.5 L712.7 329.0 L760.2 340.8 L784.0 364.6 L772.1 376.5 L736.5 364.6 L700.8 352.7 L665.2 348.0 L632.0 333.7 Z" fill="#e4d8bf" opacity="0.5"/>
<path d="M565.9 383.0 L583.9 376.3 L606.3 389.7 L617.5 421.1 L633.2 454.8 L624.2 470.5 L610.8 452.5 L595.1 425.6 Z" fill="#e4d8bf" opacity="0.5"/>
<path d="M557.0 524.8 L577.3 521.9 L603.4 530.6 L603.4 559.6 L591.8 591.5 L571.5 600.2 L559.9 579.9 Z" fill="#e4d8bf" opacity="0.5"/>
<path d="M279.0 358.1 L292.5 344.6 L305.9 331.1 L323.9 322.2 L353.0 315.4 L413.6 311.0 L415.8 317.7 L355.3 323.3 L323.9 330.0 L305.9 340.1 L288.0 358.1 Z" fill="#6bcba1"/>
<path d="M562.8 481.2 L586.0 472.5 L603.4 487.0 L603.4 524.8 L577.3 519.0 L557.0 524.8 L548.3 507.4 Z" fill="#6bcba1"/>
<path d="M513.2 282.7 L546.5 277.9 L582.1 277.9 L605.9 275.5 L622.5 286.2 L582.1 288.6 L546.5 288.6 L518.0 293.4 Z" fill="#6bcba1"/>
<path d="M769.7 286.2 L788.7 267.2 L807.7 262.5 L831.5 257.7 L859.0 250.6 L878.9 248.2 L878.9 274.4 L831.5 283.9 L807.7 293.4 L795.8 305.2 L779.2 307.6 Z" fill="#6bcba1"/>
<path d="M834.3 233.5 L862.7 238.2 L898.4 252.5 L886.5 262.0 L834.3 262.0 Z" fill="#6bcba1"/>
<path d="M532.4 353.6 L548.1 351.3 L545.9 360.3 L536.9 362.5 Z" fill="#6bcba1"/>
<path d="M380.0 63.0 L389.0 60.0 L398.0 64.0 L396.0 70.0 L388.0 74.0 L383.0 79.0 L379.0 73.0 Z" fill="#f4f2ee"/>
<path d="M910.2 342.7 L929.2 345.1 L945.9 354.6 L957.7 366.5 L955.4 373.6 L941.1 368.8 L924.5 357.0 L910.2 352.2 Z" fill="#f4f2ee"/>
<path d="M793.5 291.0 L812.5 295.7 L831.5 310.0 L848.1 324.2 L843.3 333.7 L826.7 321.9 L807.7 310.0 L795.8 302.9 Z" fill="#f4f2ee"/>
<rect width="1315" height="711" filter="url(#spkWhite)"/>
</g></g>
<g filter="url(#rag2)">
<path d="M312.6 317.7 L323.9 322.2 L337.3 321.0 L353.0 315.4 L373.2 312.1 L382.2 311.4 L382.2 261.6 L377.7 254.9 L366.5 258.2 L364.2 267.2 L356.4 278.4 L351.9 290.8 L346.3 299.7 L332.8 305.3 L314.9 308.7 L308.2 315.4 Z" fill="#7ba397"/>
<path d="M369.0 256.3 L383.2 257.5 L392.7 252.7 L402.2 248.0 L410.6 251.6 L416.5 259.9 L422.4 268.2 L430.7 274.1 L437.9 278.9 L442.6 283.6 L446.2 290.7 L447.4 297.9 L445.0 300.2 L452.1 300.2 L453.3 290.7 L454.5 284.8 L462.8 283.6 L462.8 281.2 L454.5 275.3 L447.4 268.2 L437.9 261.1 L430.7 252.7 L423.6 238.5 L435.5 236.1 L442.6 246.8 L452.1 255.1 L464.0 263.4 L468.7 271.7 L469.9 278.9 L473.5 288.4 L478.2 295.5 L481.8 300.2 L483.0 309.7 L491.3 309.7 L491.3 300.2 L497.2 299.1 L490.1 290.7 L487.7 283.6 L492.5 278.9 L505.5 276.5 L511.5 278.9 L511.5 288.4 L516.2 295.5 L518.6 305.0 L523.4 309.7 L535.2 312.1 L549.0 314.5 L550.7 357.2 L542.0 354.0 L519.0 348.0 L489.8 343.5 L476.0 341.0 L467.0 357.0 L449.5 350.0 L440.5 341.0 L424.8 335.6 L413.6 331.0 L415.8 320.0 L413.6 308.9 L404.6 308.6 L386.8 309.7 L369.0 312.1 Z" fill="#7ba397"/>
<path d="M503.3 304.2 L523.5 302.0 L532.4 308.7 L543.6 308.7 L545.9 313.2 L550.4 326.7 L550.4 340.1 L548.1 349.1 L541.4 354.7 L525.7 353.6 L514.5 331.1 Z" fill="#7ba397"/>
<path d="M516.2 276.5 L530.5 275.9 L529.3 280.1 L517.4 281.2 Z" fill="#7ba397"/>
<path d="M521.2 263.9 L525.7 250.4 L541.4 243.7 L550.4 232.5 L561.6 228.0 L579.5 223.5 L590.7 222.4 L584.0 230.2 L570.6 236.9 L557.1 241.4 L575.0 248.2 L593.0 252.6 L604.2 261.6 L606.4 270.6 L597.5 275.1 L577.3 275.1 L554.9 272.8 L536.9 271.7 L523.5 272.8 Z" fill="#7ba397"/>
<path d="M659.6 226.2 L671.2 223.3 L679.9 229.1 L688.6 237.8 L671.2 243.6 L665.4 255.2 L671.2 269.7 L685.7 275.5 L679.9 287.1 L682.8 307.5 L674.1 313.3 L659.6 310.4 L653.8 298.7 L656.7 284.2 L645.1 272.6 L642.2 255.2 L653.8 243.6 Z" fill="#7ba397"/>
<path d="M550.2 362.8 L556.9 371.8 L563.7 367.3 L562.5 376.3 L577.1 392.0 L590.6 409.9 L601.8 430.1 L610.8 448.1 L615.3 466.0 L619.3 476.8 L616.4 480.6 L613.0 475.0 L604.0 461.5 L595.1 443.6 L583.9 423.4 L570.4 403.2 L559.2 380.8 Z" fill="#7ba397"/>
<path d="M647.8 362.8 L655.6 359.5 L664.6 369.6 L673.6 378.5 L684.8 380.8 L696.0 381.9 L700.5 386.4 L696.0 392.0 L691.5 389.7 L684.8 394.2 L675.8 398.7 L669.1 398.7 L665.7 389.7 L660.1 380.8 L652.3 371.8 Z" fill="#7ba397"/>
<path d="M536.0 67.0 L545.0 61.0 L551.0 69.0 L549.0 84.0 L539.0 87.0 L534.0 77.0 Z" fill="#7ba397"/>
<path d="M995.1 179.7 L1006.7 168.1 L1021.2 153.6 L1032.8 139.1 L1038.6 133.3 L1041.5 139.1 L1029.9 156.5 L1015.4 173.9 L1000.9 185.6 Z" fill="#7ba397"/>
<path d="M805.3 236.4 L814.8 226.9 L841.0 224.5 L838.6 229.2 L817.2 234.0 L810.1 243.5 Z" fill="#7ba397"/>
<path d="M711.5 234.0 L719.8 232.8 L721.0 243.5 L713.9 248.2 Z" fill="#7ba397"/>
<path d="M566.7 -3.1 L601.5 -3.1 L595.7 11.4 L584.1 17.2 L581.2 34.6 L572.5 31.7 L569.6 17.2 Z" fill="#7ba397"/>
<path d="M426.0 300.2 L435.5 299.1 L445.0 299.1 L442.6 309.7 L440.2 310.9 L433.1 306.2 L427.2 303.8 Z" fill="#6bcba1"/>
<path d="M399.3 276.5 L405.8 274.1 L408.2 278.9 L407.0 288.4 L403.4 293.1 L400.5 289.6 L398.7 282.4 Z" fill="#6bcba1"/>
<path d="M401.7 263.4 L405.8 262.2 L407.0 268.2 L404.6 272.9 L402.2 269.4 Z" fill="#6bcba1"/>
<path d="M494.9 320.4 L509.1 321.6 L506.7 324.0 L496.0 322.8 Z" fill="#6bcba1"/>
<path d="M532.4 307.6 L543.6 306.9 L540.3 311.4 L533.6 311.0 Z" fill="#6bcba1"/>
<path d="M222.5 17.2 L237.0 14.3 L248.6 18.7 L245.7 27.4 L234.1 30.3 L223.9 25.9 Z" fill="#f4f2ee"/>
<path d="M36.7 53.5 L86.1 53.5 L83.2 63.7 L78.8 78.2 L76.8 87.5 L70.1 82.5 L61.4 75.3 L49.8 69.5 L42.5 62.2 Z" fill="#f4f2ee"/>
<path d="M12.1 -0.8 L36.7 -0.8 L32.4 10.8 L12.1 10.8 Z" fill="#f4f2ee"/>
<path d="M102.0 -0.8 L125.3 -0.8 L119.4 10.8 L94.8 10.8 Z" fill="#f4f2ee"/>
</g>
</svg><svg width="1315" height="711" viewBox="0 0 1315 711" style="position:absolute;left:0;top:0;overflow:hidden">
<path d="M332.69 175.56 A16.4 16.4 0 0 1 363.11 175.56 M364.14 179.42 A16.4 16.4 0 0 1 350.18 197.94 M345.62 197.94 A16.4 16.4 0 0 1 331.66 179.42" fill="none" stroke="#008cff" stroke-opacity="0.5" stroke-width="3.6"/>
<path d="M327.87 173.61 A21.6 21.6 0 0 1 367.93 173.61 M369.29 178.69 A21.6 21.6 0 0 1 350.91 203.09 M344.89 203.09 A21.6 21.6 0 0 1 326.51 178.69" fill="none" stroke="#008cff" stroke-opacity="0.32" stroke-width="3.6"/>
<path d="M323.05 171.66 A26.8 26.8 0 0 1 372.75 171.66 M374.44 177.97 A26.8 26.8 0 0 1 351.63 208.24 M344.17 208.24 A26.8 26.8 0 0 1 321.36 177.97" fill="none" stroke="#008cff" stroke-opacity="0.16" stroke-width="3.6"/>
<circle cx="347.9" cy="181.7" r="13.3" fill="#008cff"/>
<text x="347.9" y="186.29999999999998" text-anchor="middle" font-family="Liberation Sans" font-weight="bold" font-size="12.5" fill="#000">5</text>
<path d="M435.49 207.46 A16.4 16.4 0 0 1 465.91 207.46 M466.94 211.32 A16.4 16.4 0 0 1 452.98 229.84 M448.42 229.84 A16.4 16.4 0 0 1 434.46 211.32" fill="none" stroke="#008cff" stroke-opacity="0.5" stroke-width="3.6"/>
<path d="M430.67 205.51 A21.6 21.6 0 0 1 470.73 205.51 M472.09 210.59 A21.6 21.6 0 0 1 453.71 234.99 M447.69 234.99 A21.6 21.6 0 0 1 429.31 210.59" fill="none" stroke="#008cff" stroke-opacity="0.32" stroke-width="3.6"/>
<path d="M425.85 203.56 A26.8 26.8 0 0 1 475.55 203.56 M477.24 209.87 A26.8 26.8 0 0 1 454.43 240.14 M446.97 240.14 A26.8 26.8 0 0 1 424.16 209.87" fill="none" stroke="#008cff" stroke-opacity="0.16" stroke-width="3.6"/>
<circle cx="450.70000000000005" cy="213.60000000000002" r="13.3" fill="#008cff"/>
<text x="450.70000000000005" y="218.20000000000002" text-anchor="middle" font-family="Liberation Sans" font-weight="bold" font-size="12.5" fill="#000">9</text>
<path d="M523.59 185.86 A16.4 16.4 0 0 1 554.01 185.86 M555.04 189.72 A16.4 16.4 0 0 1 541.08 208.24 M536.52 208.24 A16.4 16.4 0 0 1 522.56 189.72" fill="none" stroke="#008cff" stroke-opacity="0.5" stroke-width="3.6"/>
<path d="M518.77 183.91 A21.6 21.6 0 0 1 558.83 183.91 M560.19 188.99 A21.6 21.6 0 0 1 541.81 213.39 M535.79 213.39 A21.6 21.6 0 0 1 517.41 188.99" fill="none" stroke="#008cff" stroke-opacity="0.32" stroke-width="3.6"/>
<path d="M513.95 181.96 A26.8 26.8 0 0 1 563.65 181.96 M565.34 188.27 A26.8 26.8 0 0 1 542.53 218.54 M535.07 218.54 A26.8 26.8 0 0 1 512.26 188.27" fill="none" stroke="#008cff" stroke-opacity="0.16" stroke-width="3.6"/>
<circle cx="538.8" cy="192" r="13.3" fill="#008cff"/>
<text x="538.8" y="196.6" text-anchor="middle" font-family="Liberation Sans" font-weight="bold" font-size="12.5" fill="#000">2</text>
<path d="M541.09 316.86 A16.4 16.4 0 0 1 571.51 316.86 M572.54 320.72 A16.4 16.4 0 0 1 558.58 339.24 M554.02 339.24 A16.4 16.4 0 0 1 540.06 320.72" fill="none" stroke="#ffbf00" stroke-opacity="0.5" stroke-width="3.6"/>
<path d="M536.27 314.91 A21.6 21.6 0 0 1 576.33 314.91 M577.69 319.99 A21.6 21.6 0 0 1 559.31 344.39 M553.29 344.39 A21.6 21.6 0 0 1 534.91 319.99" fill="none" stroke="#ffbf00" stroke-opacity="0.32" stroke-width="3.6"/>
<path d="M531.45 312.96 A26.8 26.8 0 0 1 581.15 312.96 M582.84 319.27 A26.8 26.8 0 0 1 560.03 349.54 M552.57 349.54 A26.8 26.8 0 0 1 529.76 319.27" fill="none" stroke="#ffbf00" stroke-opacity="0.16" stroke-width="3.6"/>
<circle cx="556.3" cy="323" r="13.3" fill="#ffbf00"/>
<text x="556.3" y="327.6" text-anchor="middle" font-family="Liberation Sans" font-weight="bold" font-size="12.5" fill="#000">27</text>
<path d="M1013.19 324.36 A16.4 16.4 0 0 1 1043.61 324.36 M1044.64 328.22 A16.4 16.4 0 0 1 1030.68 346.74 M1026.12 346.74 A16.4 16.4 0 0 1 1012.16 328.22" fill="none" stroke="#008cff" stroke-opacity="0.5" stroke-width="3.6"/>
<path d="M1008.37 322.41 A21.6 21.6 0 0 1 1048.43 322.41 M1049.79 327.49 A21.6 21.6 0 0 1 1031.41 351.89 M1025.39 351.89 A21.6 21.6 0 0 1 1007.01 327.49" fill="none" stroke="#008cff" stroke-opacity="0.32" stroke-width="3.6"/>
<path d="M1003.55 320.46 A26.8 26.8 0 0 1 1053.25 320.46 M1054.94 326.77 A26.8 26.8 0 0 1 1032.13 357.04 M1024.67 357.04 A26.8 26.8 0 0 1 1001.86 326.77" fill="none" stroke="#008cff" stroke-opacity="0.16" stroke-width="3.6"/>
<circle cx="1028.4" cy="330.5" r="13.3" fill="#008cff"/>
<text x="1028.4" y="335.1" text-anchor="middle" font-family="Liberation Sans" font-weight="bold" font-size="12.5" fill="#000">2</text>
<path d="M1087.19 343.36 A16.4 16.4 0 0 1 1117.61 343.36 M1118.64 347.22 A16.4 16.4 0 0 1 1104.68 365.74 M1100.12 365.74 A16.4 16.4 0 0 1 1086.16 347.22" fill="none" stroke="#008cff" stroke-opacity="0.5" stroke-width="3.6"/>
<path d="M1082.37 341.41 A21.6 21.6 0 0 1 1122.43 341.41 M1123.79 346.49 A21.6 21.6 0 0 1 1105.41 370.89 M1099.39 370.89 A21.6 21.6 0 0 1 1081.01 346.49" fill="none" stroke="#008cff" stroke-opacity="0.32" stroke-width="3.6"/>
<path d="M1077.55 339.46 A26.8 26.8 0 0 1 1127.25 339.46 M1128.94 345.77 A26.8 26.8 0 0 1 1106.13 376.04 M1098.67 376.04 A26.8 26.8 0 0 1 1075.86 345.77" fill="none" stroke="#008cff" stroke-opacity="0.16" stroke-width="3.6"/>
<circle cx="1102.4" cy="349.5" r="13.3" fill="#008cff"/>
<text x="1102.4" y="354.1" text-anchor="middle" font-family="Liberation Sans" font-weight="bold" font-size="12.5" fill="#000">2</text>
<path d="M1176.79 320.86 A16.4 16.4 0 0 1 1207.21 320.86 M1208.24 324.72 A16.4 16.4 0 0 1 1194.28 343.24 M1189.72 343.24 A16.4 16.4 0 0 1 1175.76 324.72" fill="none" stroke="#008cff" stroke-opacity="0.5" stroke-width="3.6"/>
<path d="M1171.97 318.91 A21.6 21.6 0 0 1 1212.03 318.91 M1213.39 323.99 A21.6 21.6 0 0 1 1195.01 348.39 M1188.99 348.39 A21.6 21.6 0 0 1 1170.61 323.99" fill="none" stroke="#008cff" stroke-opacity="0.32" stroke-width="3.6"/>
<path d="M1167.15 316.96 A26.8 26.8 0 0 1 1216.85 316.96 M1218.54 323.27 A26.8 26.8 0 0 1 1195.73 353.54 M1188.27 353.54 A26.8 26.8 0 0 1 1165.46 323.27" fill="none" stroke="#008cff" stroke-opacity="0.16" stroke-width="3.6"/>
<circle cx="1192" cy="327" r="13.3" fill="#008cff"/>
<text x="1192" y="331.6" text-anchor="middle" font-family="Liberation Sans" font-weight="bold" font-size="12.5" fill="#000">4</text>
<path d="M865.59 372.06 A16.4 16.4 0 0 1 896.01 372.06 M897.04 375.92 A16.4 16.4 0 0 1 883.08 394.44 M878.52 394.44 A16.4 16.4 0 0 1 864.56 375.92" fill="none" stroke="#008cff" stroke-opacity="0.5" stroke-width="3.6"/>
<path d="M860.77 370.11 A21.6 21.6 0 0 1 900.83 370.11 M902.19 375.19 A21.6 21.6 0 0 1 883.81 399.59 M877.79 399.59 A21.6 21.6 0 0 1 859.41 375.19" fill="none" stroke="#008cff" stroke-opacity="0.32" stroke-width="3.6"/>
<path d="M855.95 368.16 A26.8 26.8 0 0 1 905.65 368.16 M907.34 374.47 A26.8 26.8 0 0 1 884.53 404.74 M877.07 404.74 A26.8 26.8 0 0 1 854.26 374.47" fill="none" stroke="#008cff" stroke-opacity="0.16" stroke-width="3.6"/>
<circle cx="880.8" cy="378.20000000000005" r="13.3" fill="#008cff"/>
<text x="880.8" y="382.80000000000007" text-anchor="middle" font-family="Liberation Sans" font-weight="bold" font-size="12.5" fill="#000">7</text>
<path d="M751.49 391.36 A16.4 16.4 0 0 1 781.91 391.36 M782.94 395.22 A16.4 16.4 0 0 1 768.98 413.74 M764.42 413.74 A16.4 16.4 0 0 1 750.46 395.22" fill="none" stroke="#008cff" stroke-opacity="0.5" stroke-width="3.6"/>
<path d="M746.67 389.41 A21.6 21.6 0 0 1 786.73 389.41 M788.09 394.49 A21.6 21.6 0 0 1 769.71 418.89 M763.69 418.89 A21.6 21.6 0 0 1 745.31 394.49" fill="none" stroke="#008cff" stroke-opacity="0.32" stroke-width="3.6"/>
<path d="M741.85 387.46 A26.8 26.8 0 0 1 791.55 387.46 M793.24 393.77 A26.8 26.8 0 0 1 770.43 424.04 M762.97 424.04 A26.8 26.8 0 0 1 740.16 393.77" fill="none" stroke="#008cff" stroke-opacity="0.16" stroke-width="3.6"/>
<circle cx="766.7" cy="397.5" r="13.3" fill="#008cff"/>
<text x="766.7" y="402.1" text-anchor="middle" font-family="Liberation Sans" font-weight="bold" font-size="12.5" fill="#000">3</text>
<path d="M331.99 516.66 A16.4 16.4 0 0 1 362.41 516.66 M363.44 520.52 A16.4 16.4 0 0 1 349.48 539.04 M344.92 539.04 A16.4 16.4 0 0 1 330.96 520.52" fill="none" stroke="#008cff" stroke-opacity="0.5" stroke-width="3.6"/>
<path d="M327.17 514.71 A21.6 21.6 0 0 1 367.23 514.71 M368.59 519.79 A21.6 21.6 0 0 1 350.21 544.19 M344.19 544.19 A21.6 21.6 0 0 1 325.81 519.79" fill="none" stroke="#008cff" stroke-opacity="0.32" stroke-width="3.6"/>
<path d="M322.35 512.76 A26.8 26.8 0 0 1 372.05 512.76 M373.74 519.07 A26.8 26.8 0 0 1 350.93 549.34 M343.47 549.34 A26.8 26.8 0 0 1 320.66 519.07" fill="none" stroke="#008cff" stroke-opacity="0.16" stroke-width="3.6"/>
<circle cx="347.2" cy="522.8" r="13.3" fill="#008cff"/>
<text x="347.2" y="527.4" text-anchor="middle" font-family="Liberation Sans" font-weight="bold" font-size="12.5" fill="#000">2</text>
<path d="M563.49 558.86 A16.4 16.4 0 0 1 593.91 558.86 M594.94 562.72 A16.4 16.4 0 0 1 580.98 581.24 M576.42 581.24 A16.4 16.4 0 0 1 562.46 562.72" fill="none" stroke="#008cff" stroke-opacity="0.5" stroke-width="3.6"/>
<path d="M558.67 556.91 A21.6 21.6 0 0 1 598.73 556.91 M600.09 561.99 A21.6 21.6 0 0 1 581.71 586.39 M575.69 586.39 A21.6 21.6 0 0 1 557.31 561.99" fill="none" stroke="#008cff" stroke-opacity="0.32" stroke-width="3.6"/>
<path d="M553.85 554.96 A26.8 26.8 0 0 1 603.55 554.96 M605.24 561.27 A26.8 26.8 0 0 1 582.43 591.54 M574.97 591.54 A26.8 26.8 0 0 1 552.16 561.27" fill="none" stroke="#008cff" stroke-opacity="0.16" stroke-width="3.6"/>
<circle cx="578.7" cy="565" r="13.3" fill="#008cff"/>
<text x="578.7" y="569.6" text-anchor="middle" font-family="Liberation Sans" font-weight="bold" font-size="12.5" fill="#000">6</text>
<path d="M1033.59 599.06 A16.4 16.4 0 0 1 1064.01 599.06 M1065.04 602.92 A16.4 16.4 0 0 1 1051.08 621.44 M1046.52 621.44 A16.4 16.4 0 0 1 1032.56 602.92" fill="none" stroke="#008cff" stroke-opacity="0.5" stroke-width="3.6"/>
<path d="M1028.77 597.11 A21.6 21.6 0 0 1 1068.83 597.11 M1070.19 602.19 A21.6 21.6 0 0 1 1051.81 626.59 M1045.79 626.59 A21.6 21.6 0 0 1 1027.41 602.19" fill="none" stroke="#008cff" stroke-opacity="0.32" stroke-width="3.6"/>
<path d="M1023.95 595.16 A26.8 26.8 0 0 1 1073.65 595.16 M1075.34 601.47 A26.8 26.8 0 0 1 1052.53 631.74 M1045.07 631.74 A26.8 26.8 0 0 1 1022.26 601.47" fill="none" stroke="#008cff" stroke-opacity="0.16" stroke-width="3.6"/>
<circle cx="1048.8" cy="605.2" r="13.3" fill="#008cff"/>
<text x="1048.8" y="609.8000000000001" text-anchor="middle" font-family="Liberation Sans" font-weight="bold" font-size="12.5" fill="#000">2</text>
<path d="M37.29 699.06 A16.4 16.4 0 0 1 67.71 699.06 M68.74 702.92 A16.4 16.4 0 0 1 54.78 721.44 M50.22 721.44 A16.4 16.4 0 0 1 36.26 702.92" fill="none" stroke="#008cff" stroke-opacity="0.5" stroke-width="3.6"/>
<path d="M32.47 697.11 A21.6 21.6 0 0 1 72.53 697.11 M73.89 702.19 A21.6 21.6 0 0 1 55.51 726.59 M49.49 726.59 A21.6 21.6 0 0 1 31.11 702.19" fill="none" stroke="#008cff" stroke-opacity="0.32" stroke-width="3.6"/>
<path d="M27.65 695.16 A26.8 26.8 0 0 1 77.35 695.16 M79.04 701.47 A26.8 26.8 0 0 1 56.23 731.74 M48.77 731.74 A26.8 26.8 0 0 1 25.96 701.47" fill="none" stroke="#008cff" stroke-opacity="0.16" stroke-width="3.6"/>
<circle cx="52.5" cy="705.2" r="13.3" fill="#008cff"/>
<text x="52.5" y="709.8000000000001" text-anchor="middle" font-family="Liberation Sans" font-weight="bold" font-size="12.5" fill="#000">2</text>
<g transform="translate(134.70,151.50)"><path d="M0 8.2 Q-5 6.4 -8.2 8.6 Q-10.6 12 -8.6 17.5 L0 31.6 L8.6 17.5 Q10.6 12 8.2 8.6 Q5 6.4 0 8.2 Z" fill="#29aae2" stroke="#111" stroke-width="1.5" stroke-linejoin="round"/><circle cx="0" cy="0" r="5.9" fill="#22bcef" stroke="#111" stroke-width="1.4"/><path d="M0 -5.9 V5.9 M0 0.6 L-4 4.2 M0 0.6 L4 4.2" stroke="#111" stroke-width="1.2" fill="none"/></g>
<g transform="translate(414.60,55.30)"><path d="M0 8.2 Q-5 6.4 -8.2 8.6 Q-10.6 12 -8.6 17.5 L0 31.6 L8.6 17.5 Q10.6 12 8.2 8.6 Q5 6.4 0 8.2 Z" fill="#29aae2" stroke="#111" stroke-width="1.5" stroke-linejoin="round"/><circle cx="0" cy="0" r="5.9" fill="#22bcef" stroke="#111" stroke-width="1.4"/><path d="M0 -5.9 V5.9 M0 0.6 L-4 4.2 M0 0.6 L4 4.2" stroke="#111" stroke-width="1.2" fill="none"/></g>
<g transform="translate(486.60,48.60)"><path d="M0 8.2 Q-5 6.4 -8.2 8.6 Q-10.6 12 -8.6 17.5 L0 31.6 L8.6 17.5 Q10.6 12 8.2 8.6 Q5 6.4 0 8.2 Z" fill="#29aae2" stroke="#111" stroke-width="1.5" stroke-linejoin="round"/><circle cx="0" cy="0" r="5.9" fill="#22bcef" stroke="#111" stroke-width="1.4"/><path d="M0 -5.9 V5.9 M0 0.6 L-4 4.2 M0 0.6 L4 4.2" stroke="#111" stroke-width="1.2" fill="none"/></g>
<g transform="translate(315.60,252.30)"><path d="M0 8.2 Q-5 6.4 -8.2 8.6 Q-10.6 12 -8.6 17.5 L0 31.6 L8.6 17.5 Q10.6 12 8.2 8.6 Q5 6.4 0 8.2 Z" fill="#29aae2" stroke="#111" stroke-width="1.5" stroke-linejoin="round"/><circle cx="0" cy="0" r="5.9" fill="#22bcef" stroke="#111" stroke-width="1.4"/><path d="M0 -5.9 V5.9 M0 0.6 L-4 4.2 M0 0.6 L4 4.2" stroke="#111" stroke-width="1.2" fill="none"/></g>
<g transform="translate(825.60,465.40)"><path d="M0 8.2 Q-5 6.4 -8.2 8.6 Q-10.6 12 -8.6 17.5 L0 31.6 L8.6 17.5 Q10.6 12 8.2 8.6 Q5 6.4 0 8.2 Z" fill="#29aae2" stroke="#111" stroke-width="1.5" stroke-linejoin="round"/><circle cx="0" cy="0" r="5.9" fill="#22bcef" stroke="#111" stroke-width="1.4"/><path d="M0 -5.9 V5.9 M0 0.6 L-4 4.2 M0 0.6 L4 4.2" stroke="#111" stroke-width="1.2" fill="none"/></g>
<g transform="translate(1103.30,432.20)"><path d="M0 8.2 Q-5 6.4 -8.2 8.6 Q-10.6 12 -8.6 17.5 L0 31.6 L8.6 17.5 Q10.6 12 8.2 8.6 Q5 6.4 0 8.2 Z" fill="#29aae2" stroke="#111" stroke-width="1.5" stroke-linejoin="round"/><circle cx="0" cy="0" r="5.9" fill="#22bcef" stroke="#111" stroke-width="1.4"/><path d="M0 -5.9 V5.9 M0 0.6 L-4 4.2 M0 0.6 L4 4.2" stroke="#111" stroke-width="1.2" fill="none"/></g>
<g transform="translate(981.50,505.60)"><path d="M0 8.2 Q-5 6.4 -8.2 8.6 Q-10.6 12 -8.6 17.5 L0 31.6 L8.6 17.5 Q10.6 12 8.2 8.6 Q5 6.4 0 8.2 Z" fill="#29aae2" stroke="#111" stroke-width="1.5" stroke-linejoin="round"/><circle cx="0" cy="0" r="5.9" fill="#22bcef" stroke="#111" stroke-width="1.4"/><path d="M0 -5.9 V5.9 M0 0.6 L-4 4.2 M0 0.6 L4 4.2" stroke="#111" stroke-width="1.2" fill="none"/></g>
</svg>
<div style="position:absolute;left:11px;top:10.8px;width:184px;height:43.5px;background:#fff;border-radius:2px;box-shadow:0 1px 4px -1px rgba(0,0,0,0.3);"></div>
<div style="position:absolute;left:85.5px;top:10.8px;width:1px;height:43.5px;background:#e6e6e6;"></div>
<div style="position:absolute;left:30.2px;top:23.5px;font-size:18.5px;line-height:1;font-weight:bold;color:#000;white-space:nowrap;">Map</div>
<div style="position:absolute;left:106.5px;top:23.5px;font-size:18px;line-height:1;color:#565656;letter-spacing:0.55px;white-space:nowrap;">Satellite</div>
<div style="position:absolute;left:1113.3px;top:10.5px;width:192px;height:43.6px;background:#fff;border-radius:2px;box-shadow:0 1px 4px -1px rgba(0,0,0,0.3);"></div>
<div style="position:absolute;left:1132.6px;top:23.3px;font-size:17.1px;line-height:1;color:#1a1a1a;white-space:nowrap;">Redo search in map</div>
<div style="position:absolute;left:1260.7px;top:65.1px;width:44px;height:44px;background:#fff;border-radius:2px;box-shadow:0 1px 4px -1px rgba(0,0,0,0.3);"><svg width="44" height="44" style="position:absolute;left:0;top:0"><path d="M14 19 V13.5 H19.5 M25 13.5 H30.5 V19 M30.5 25 V30.5 H25 M19.5 30.5 H14 V25" fill="none" stroke="#666" stroke-width="2.8"/></svg></div>
<div style="position:absolute;left:1261px;top:562.5px;width:44px;height:44px;background:#fff;border-radius:50%;box-shadow:0 1px 4px -1px rgba(0,0,0,0.3);"><svg width="44" height="44" style="position:absolute;left:0;top:0"><g fill="none" stroke="#666" stroke-width="2.6"><path d="M18.2 14.8 L22 11 L25.8 14.8"/><path d="M18.2 29.2 L22 33 L25.8 29.2"/><path d="M14.8 18.2 L11 22 L14.8 25.8"/><path d="M29.2 18.2 L33 22 L29.2 25.8"/></g></svg></div>
<div style="position:absolute;left:1261px;top:641.8px;width:44px;height:44px;background:#fff;border-radius:2px;box-shadow:0 1px 4px -1px rgba(0,0,0,0.3);"><svg width="44" height="44" style="position:absolute;left:0;top:0"><path d="M17 20 Q17 17.6 19.5 17.6 H24.5 Q27 17.6 27 20 L29.5 27.5 Q29.8 28.6 28.6 28.6 L27.6 28.6 L26 24 V38.6 H22.8 V31 H21.2 V38.6 H18 V24 L16.4 28.6 L15.4 28.6 Q14.2 28.6 14.5 27.5 Z" fill="#fdb92d" stroke="#b8860b" stroke-width="0.5"/><path d="M19.5 17.8 L22 22 L24.5 17.8 Z" fill="#e8891c"/><circle cx="22" cy="12.4" r="5.6" fill="#fdb92d" stroke="#b8860b" stroke-width="0.5"/></svg></div>
<div style="position:absolute;left:999.4px;top:697px;width:316px;height:15px;background:rgba(245,245,245,0.72);"></div>
<div style="position:absolute;left:1005.3px;top:700.6px;font-size:10.8px;line-height:1;color:#000;white-space:nowrap;">Keyboard shortcuts</div>
<div style="position:absolute;left:1113.5px;top:700.6px;font-size:10.8px;line-height:1;color:#000;white-space:nowrap;">Map data ©2025 Google, INEGI</div>
<div style="position:absolute;left:1279.6px;top:700.6px;font-size:10.8px;line-height:1;color:#000;white-space:nowrap;">Terms</div>
<div style="position:absolute;left:1106.5px;top:699px;width:1px;height:12px;background:rgba(0,0,0,0.08);"></div>
<div style="position:absolute;left:1272.5px;top:699px;width:1px;height:12px;background:rgba(0,0,0,0.08);"></div>
<div style="position:absolute;left:11px;top:687.5px;font-size:19px;line-height:1;font-weight:bold;color:#fff;white-space:nowrap;letter-spacing:-0.6px;-webkit-text-stroke:0px;text-shadow:0 0 1.5px #2f5f4f,0 0 1.5px #2f5f4f,0 0 2px #2f5f4f;">Google</div></div>
<div style="position:absolute;left:101px;top:1085px;width:1316px;height:528px;background:#fff;"></div>
<svg style="position:absolute;left:111.5px;top:1096.8px" width="12" height="16"><path d="M6 0.2 L11.2 5.6 L0.8 5.6 Z" fill="#8fb3dc"/><path d="M0.8 8.6 L11.2 8.6 L6 14.2 Z" fill="#8fb3dc"/></svg>
<div class="ct" style="left:130.8px;top:1099.4px;font-size:16.5px;font-weight:bold;color:#2c3338;">Name</div>
<svg style="position:absolute;left:550.17px;top:1096.8px" width="12" height="16"><path d="M6 0.2 L11.2 5.6 L0.8 5.6 Z" fill="#8fb3dc"/><path d="M0.8 8.6 L11.2 8.6 L6 14.2 Z" fill="#8fb3dc"/></svg>
<div class="ct" style="left:569.4699999999999px;top:1099.4px;font-size:16.5px;font-weight:bold;color:#2c3338;">Country of Origin</div>
<svg style="position:absolute;left:988.83px;top:1096.8px" width="12" height="16"><path d="M6 0.2 L11.2 5.6 L0.8 5.6 Z" fill="#8fb3dc"/><path d="M0.8 8.6 L11.2 8.6 L6 14.2 Z" fill="#8fb3dc"/></svg>
<div class="ct" style="left:1008.13px;top:1099.4px;font-size:16.5px;font-weight:bold;color:#2c3338;">Working Country</div>
<div style="position:absolute;left:101px;top:1129px;width:1316px;height:44px;background:#fefde3;"></div>
<div class="ct lnk" style="left:108.2px;top:1142.5px;">Chiranjibi Bhandari</div>
<div class="ct" style="left:546.87px;top:1142.5px;">Nepal</div>
<div class="ct" style="left:985.5300000000001px;top:1142.5px;">Nepal</div>
<div style="position:absolute;left:101px;top:1173px;width:1316px;height:44px;background:#fefde3;"></div>
<div class="ct lnk" style="left:108.2px;top:1186.5px;">Ciara Renee Johnson</div>
<div class="ct" style="left:546.87px;top:1186.5px;">United States</div>
<div class="ct" style="left:985.5300000000001px;top:1186.5px;">China</div>
<div style="position:absolute;left:101px;top:1217px;width:1316px;height:44px;background:#fefde3;"></div>
<div class="ct lnk" style="left:108.2px;top:1230.5px;">Kevin Kester</div>
<div class="ct" style="left:546.87px;top:1230.5px;">United States</div>
<div class="ct" style="left:985.5300000000001px;top:1230.5px;">Korea, Republic of</div>
<div style="position:absolute;left:101px;top:1261px;width:1316px;height:44px;background:#fefde3;"></div>
<div class="ct lnk" style="left:108.2px;top:1274.5px;">Shannon Kobran</div>
<div class="ct" style="left:546.87px;top:1274.5px;">United States</div>
<div class="ct" style="left:985.5300000000001px;top:1274.5px;">Malaysia</div>
<div style="position:absolute;left:101px;top:1305px;width:1316px;height:44px;background:#fefde3;"></div>
<div class="ct lnk" style="left:108.2px;top:1318.5px;">Syed Sikander Mehdi</div>
<div class="ct" style="left:546.87px;top:1318.5px;">Pakistan</div>
<div class="ct" style="left:985.5300000000001px;top:1318.5px;">Pakistan</div>
<div style="position:absolute;left:101px;top:1349px;width:1316px;height:44px;background:#fefde3;"></div>
<div class="ct lnk" style="left:108.2px;top:1362.5px;">Regina Proença Proença</div>
<div class="ct" style="left:546.87px;top:1362.5px;">Brazil</div>
<div class="ct" style="left:985.5300000000001px;top:1362.5px;">Brazil</div>
<div class="ct lnk" style="left:108.2px;top:1406.5px;">Gloria Maria Abarca Obregon</div>
<div class="ct" style="left:546.87px;top:1406.5px;">Mexico</div>
<div class="ct" style="left:985.5300000000001px;top:1406.5px;">Mexico</div>
<div class="ct lnk" style="left:108.2px;top:1450.5px;">Juhi Adhikari</div>
<div class="ct" style="left:546.87px;top:1450.5px;">Nepal</div>
<div class="ct" style="left:985.5300000000001px;top:1450.5px;">Nepal</div>
<div class="ct lnk" style="left:108.2px;top:1494.5px;">Musah Issaka Akunkel</div>
<div class="ct" style="left:546.87px;top:1494.5px;">Ghana</div>
<div class="ct" style="left:985.5300000000001px;top:1494.5px;">Ghana</div>
<div class="ct lnk" style="left:108.2px;top:1538.5px;">Ronni Alexander</div>
<div class="ct" style="left:546.87px;top:1538.5px;">United States</div>
<div class="ct" style="left:985.5300000000001px;top:1538.5px;">Japan</div>
<div class="ct lnk" style="left:108.2px;top:1582.5px;">Elena Antoniadou</div>
<div class="ct" style="left:546.87px;top:1582.5px;">Cyprus</div>
<div class="ct" style="left:985.5300000000001px;top:1582.5px;">Cyprus</div>
<div style="position:absolute;left:101px;top:1084.5px;width:1316px;height:1px;background:#dcdcde;"></div>
<div style="position:absolute;left:101px;top:1128.5px;width:1316px;height:1px;background:#dcdcde;"></div>
<div style="position:absolute;left:101px;top:1172.5px;width:1316px;height:1px;background:#dcdcde;"></div>
<div style="position:absolute;left:101px;top:1216.5px;width:1316px;height:1px;background:#dcdcde;"></div>
<div style="position:absolute;left:101px;top:1260.5px;width:1316px;height:1px;background:#dcdcde;"></div>
<div style="position:absolute;left:101px;top:1304.5px;width:1316px;height:1px;background:#dcdcde;"></div>
<div style="position:absolute;left:101px;top:1348.5px;width:1316px;height:1px;background:#dcdcde;"></div>
<div style="position:absolute;left:101px;top:1392.5px;width:1316px;height:1px;background:#dcdcde;"></div>
<div style="position:absolute;left:101px;top:1436.5px;width:1316px;height:1px;background:#dcdcde;"></div>
<div style="position:absolute;left:101px;top:1480.5px;width:1316px;height:1px;background:#dcdcde;"></div>
<div style="position:absolute;left:101px;top:1524.5px;width:1316px;height:1px;background:#dcdcde;"></div>
<div style="position:absolute;left:101px;top:1568.5px;width:1316px;height:1px;background:#dcdcde;"></div>
<div style="position:absolute;left:101px;top:1612.5px;width:1316px;height:1px;background:#dcdcde;"></div>
<div style="position:absolute;left:100.5px;top:1085px;width:1px;height:528px;background:#dcdcde;"></div>
<div style="position:absolute;left:539.17px;top:1085px;width:1px;height:528px;background:#dcdcde;"></div>
<div style="position:absolute;left:977.83px;top:1085px;width:1px;height:528px;background:#dcdcde;"></div>
<div style="position:absolute;left:1416.5px;top:1085px;width:1px;height:528px;background:#dcdcde;"></div>
<div class="t" style="left:101px;top:1030.9px;font-size:17px;color:#50575e;">Displaying 1 - 116 of 116</div><div style="position:absolute;left:0;top:1578px;width:1516px;height:22px;background:linear-gradient(to bottom,rgba(0,0,0,0),rgba(0,0,0,0.022));z-index:40;"></div>
<div style="position:absolute;left:1229px;top:1588px;width:189px;height:20px;box-sizing:border-box;background:#f3f3f3;border:1px solid #cfcfcf;border-radius:2px;z-index:41;">
<svg style="position:absolute;left:5px;top:6px" width="28" height="14"><rect x="0" y="0" width="28" height="14" fill="#fff"/><rect x="0" y="0" width="28" height="2" fill="#c33"/><rect x="0" y="4" width="28" height="2" fill="#c33"/><rect x="0" y="0" width="13" height="6" fill="#3c3b6e"/></svg>
<div class="t" style="left:38px;top:8px;font-size:15px;color:#444;">English</div>
</div>
</body></html>
